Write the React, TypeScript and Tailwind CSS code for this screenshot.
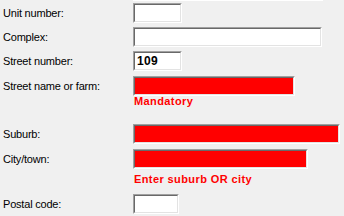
import React from "react";

function Field({ w, red, value }: { w: string; red?: boolean; value?: string }) {
  return (
    <div className={`${w} h-[20px] border-t border-l border-t-[#a0a0a0] border-l-[#a0a0a0] border-b border-r border-b-white border-r-white`}>
      <div
        className={`h-full w-full border-t border-l border-t-[#696969] border-l-[#696969] border-b border-r border-b-[#e3e3e3] border-r-[#e3e3e3] ${
          red ? "bg-[#ff0000]" : "bg-white"
        } flex items-center pl-[2px]`}
      >
        {value ? (
          <span className="text-[12px] font-bold text-black leading-none tracking-[0.3px]">{value}</span>
        ) : null}
      </div>
    </div>
  );
}

function Row({ label, mt, children }: { label: string; mt: string; children: React.ReactNode }) {
  return (
    <div className={`flex items-center h-[20px] ${mt}`}>
      <div className="w-[133px] shrink-0 pl-[3px] text-black tracking-[-0.2px]">{label}</div>
      {children}
    </div>
  );
}

function Note({ text, mt }: { text: string; mt: string }) {
  return (
    <div className={`pl-[134px] ${mt} h-[13px] leading-[13px] text-[11px] font-bold text-[#ff0000] tracking-[0.4px]`}>
      {text}
    </div>
  );
}

export default function App() {
  return (
    <div className="w-[344px] h-[216px] bg-[#f0f0f0] overflow-hidden font-['Liberation_Sans',Arial,sans-serif] text-[11px] leading-[13px]">
      <div className="ml-[133px] w-[190px] h-px bg-white" />
      <Row label="Unit number:" mt="mt-[2px]">
        <Field w="w-[49px]" />
      </Row>
      <Row label="Complex:" mt="mt-[4px]">
        <Field w="w-[189px]" />
      </Row>
      <Row label="Street number:" mt="mt-[4px]">
        <Field w="w-[49px]" value="109" />
      </Row>
      <Row label="Street name or farm:" mt="mt-[5px]">
        <Field w="w-[162px]" red />
      </Row>
      <Note text="Mandatory" mt="mt-[-1px]" />
      <Row label="Suburb:" mt="mt-[16px]">
        <Field w="w-[207px]" red />
      </Row>
      <Row label="City/town:" mt="mt-[5px]">
        <Field w="w-[175px]" red />
      </Row>
      <Note text="Enter suburb OR city" mt="mt-[4px]" />
      <Row label="Postal code:" mt="mt-[8px]">
        <Field w="w-[46px]" />
      </Row>
    </div>
  );
}
